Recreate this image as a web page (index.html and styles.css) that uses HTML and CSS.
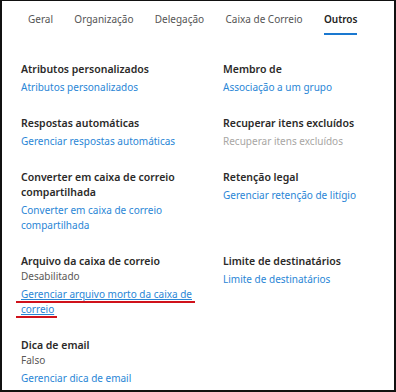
FILE: index.html
```html
<!DOCTYPE html>
<html lang="pt">
<head>
<meta charset="utf-8">
<link rel="stylesheet" href="styles.css">
</head>
<body>
<div class="frame">
  <nav class="tabs">
    <span class="tab">Geral</span>
    <span class="tab">Organização</span>
    <span class="tab">Delegação</span>
    <span class="tab">Caixa de Correio</span>
    <span class="tab active">Outros</span>
  </nav>
  <div class="grid">
    <div class="item">
      <div class="label">Atributos personalizados</div>
      <a class="link">Atributos personalizados</a>
    </div>
    <div class="item">
      <div class="label">Membro de</div>
      <a class="link">Associação a um grupo</a>
    </div>
    <div class="item">
      <div class="label">Respostas automáticas</div>
      <a class="link">Gerenciar respostas automáticas</a>
    </div>
    <div class="item">
      <div class="label">Recuperar itens excluídos</div>
      <span class="link disabled">Recuperar itens excluídos</span>
    </div>
    <div class="item">
      <div class="label">Converter em caixa de correio compartilhada</div>
      <a class="link">Converter em caixa de correio compartilhada</a>
    </div>
    <div class="item">
      <div class="label">Retenção legal</div>
      <a class="link">Gerenciar retenção de litígio</a>
    </div>
    <div class="item">
      <div class="label">Arquivo da caixa de correio</div>
      <div class="value">Desabilitado</div>
      <a class="link hovered"><span class="mark">Gerenciar arquivo morto da caixa de correio</span></a>
    </div>
    <div class="item">
      <div class="label">Limite de destinatários</div>
      <a class="link">Limite de destinatários</a>
    </div>
    <div class="item">
      <div class="label">Dica de email</div>
      <div class="value">Falso</div>
      <a class="link">Gerenciar dica de email</a>
    </div>
  </div>
</div>
</body>
</html>
```

FILE: styles.css
```css
* { box-sizing: border-box; }
html, body { margin: 0; padding: 0; background: #fff; }
body {
  font-family: "Noto Sans", "Open Sans", sans-serif;
  font-size: 10px;
  color: #323130;
}
.frame {
  width: 396px;
  height: 392px;
  border: 2px solid #111;
  border-top-width: 1px;
  border-left-width: 2px;
  overflow: hidden;
}
.tabs {
  display: flex;
  gap: 21.3px;
  padding-left: 26px;
}
.tab {
  font-size: 10px;
  line-height: 16px;
  padding-top: 10px;
  padding-bottom: 6px;
  color: #555;
  border-bottom: 2px solid transparent;
}
.tab.active {
  color: #222;
  font-weight: 600;
  border-bottom-color: #1a78d0;
}
.grid {
  display: grid;
  grid-template-columns: 186px 1fr;
  column-gap: 16px;
  row-gap: 21px;
  padding: 27px 12px 0 19px;
  line-height: 15px;
}
.item { display: flex; flex-direction: column; align-items: flex-start; }
.label { font-weight: 600; font-size: 10.5px; color: #2b2a29; }
.value { color: #5a5856; }
.link {
  margin-top: 3px;
  color: #2a86d6;
  text-decoration: none;
}
.link.disabled { color: #a8a6a4; }
.link.hovered { text-decoration: underline; text-decoration-color: #2a86d6; }
.mark {
  border-bottom: 2px solid #d0121b;
  padding-left: 5px;
  margin-left: -5px;
  padding-right: 3px;
  margin-right: -3px;
  -webkit-box-decoration-break: clone;
  box-decoration-break: clone;
}
```
